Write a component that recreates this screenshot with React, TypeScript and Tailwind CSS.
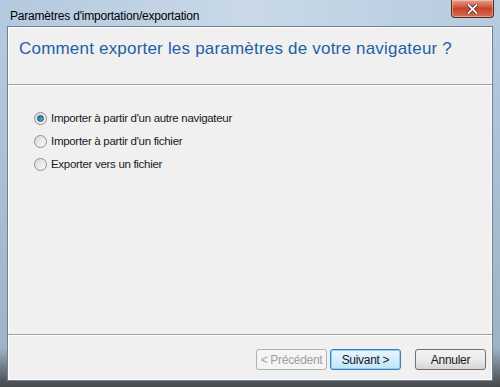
import React from "react";

const font = { fontFamily: '"Liberation Sans", Arial, sans-serif' };

function Radio({ checked, label }: { checked?: boolean; label: string }) {
  return (
    <div className="flex items-center gap-[4px] h-[23px]">
      <div className="w-[13px] h-[13px] rounded-full border border-[#8e8f8f] bg-gradient-to-br from-[#d9d9d9] to-[#f9f9f9] flex items-center justify-center">
        {checked && (
          <div className="w-[7px] h-[7px] rounded-full bg-gradient-to-br from-[#2b6f9c] to-[#5fb4d8] border border-[#1e4f6f]" />
        )}
      </div>
      <span className="text-[11.5px] text-[#1a1a1a] tracking-[-0.3px]">{label}</span>
    </div>
  );
}

function Btn({ label, disabled, primary }: { label: string; disabled?: boolean; primary?: boolean }) {
  return (
    <div
      className={
        "w-[71px] h-[21px] rounded-[3px] flex items-center justify-center text-[12px] tracking-[-0.3px] " +
        (disabled
          ? "border border-[#adb2b5] bg-[#f4f4f4] text-[#a0a0a0]"
          : primary
          ? "border border-[#3c7fb1] bg-gradient-to-b from-[#eaf6fd] to-[#bee6fd] text-[#1a1a1a] shadow-[inset_0_0_0_1px_#8fd0f5]"
          : "border border-[#707070] bg-gradient-to-b from-[#f2f2f2] via-[#ebebeb] to-[#d6d6d6] text-[#1a1a1a]")
      }
    >
      {label}
    </div>
  );
}

export default function App() {
  return (
    <div
      style={font}
      className="w-[500px] h-[387px] flex flex-col bg-gradient-to-b from-[#b7cce0] via-[#9fb3c7] via-90% to-[#45474a] overflow-hidden"
    >
      <div className="h-[26px] flex items-start justify-between pl-[10px] pr-[6px] bg-gradient-to-r from-[#b3c9df] via-[#c9d9e8] to-[#b6cbde]">
        <span className="text-[12px] text-black mt-[7px] tracking-[-0.2px]">Paramètres d'importation/exportation</span>
        <div className="w-[43px] h-[18px] rounded-b-[4px] border border-[#5a2a22] border-t-0 bg-gradient-to-b from-[#e6a08e] via-[#c8432b] to-[#d66b4f] flex items-center justify-center shadow-[inset_0_0_0_1px_rgba(255,255,255,0.35)]">
          <svg width="11" height="10" viewBox="0 0 11 10">
            <path d="M1.5 1 L9.5 9 M9.5 1 L1.5 9" stroke="#3a1a14" strokeWidth="3.2" strokeLinecap="square" />
            <path d="M1.5 1 L9.5 9 M9.5 1 L1.5 9" stroke="#ffffff" strokeWidth="1.8" strokeLinecap="square" />
          </svg>
        </div>
      </div>
      <div className="flex-1 mx-[7px] mb-[6px] border border-[#6f7f8f] bg-[#f0f0f0] flex flex-col shadow-[inset_0_0_0_1px_#ffffff]">
        <div className="h-[58px] flex items-start pt-[9px] pl-[11px] border-b border-[#a0a0a0] shadow-[0_1px_0_#ffffff]">
          <span className="text-[17px] tracking-[0.2px] text-[#1f5fa6]">Comment exporter les paramètres de votre navigateur ?</span>
        </div>
        <div className="flex-1 flex flex-col pl-[26px] pt-[22px]">
          <Radio checked label="Importer à partir d'un autre navigateur" />
          <Radio label="Importer à partir d'un fichier" />
          <Radio label="Exporter vers un fichier" />
        </div>
        <div className="h-[46px] border-t border-[#a0a0a0] shadow-[inset_0_1px_0_#ffffff] flex items-center justify-end gap-[3px] pr-[6px] pt-[4px]">
          <Btn label="< Précédent" disabled />
          <Btn label="Suivant >" primary />
          <div className="w-[8px]" />
          <Btn label="Annuler" />
        </div>
      </div>
    </div>
  );
}
